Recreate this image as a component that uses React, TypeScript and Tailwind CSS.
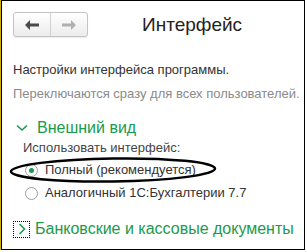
import React from 'react';

const green = 'text-[#1a9a4c]';

const Radio = ({ checked }: { checked?: boolean }) => (
    <span className="flex h-[13px] w-[13px] items-center justify-center rounded-full border border-[#a0a0a0] bg-white">
        {checked && <span className="h-[5px] w-[5px] rounded-full bg-[#1a9a4c]" />}
    </span>
);

const NavButtons = () => (
    <div className="flex h-[25px] w-[75px] rounded-[3px] border border-[#c4c4c4] bg-gradient-to-b from-white to-[#ececec] shadow-[0_1px_1px_rgba(0,0,0,0.08)]">
        <div className="flex flex-1 items-center justify-center border-r border-[#d0d0d0]">
            <svg width="14" height="10" viewBox="0 0 14 10">
                <path d="M0 5 L5 0 L5 3.5 L14 3.5 L14 6.5 L5 6.5 L5 10 Z" fill="#4a4a4a" />
            </svg>
        </div>
        <div className="flex flex-1 items-center justify-center">
            <svg width="14" height="10" viewBox="0 0 14 10">
                <path d="M14 5 L9 0 L9 3.5 L0 3.5 L0 6.5 L9 6.5 L9 10 Z" fill="#b0b0b0" />
            </svg>
        </div>
    </div>
);

export default function App() {
    return (
        <div className="h-[252px] w-[307px] bg-white font-['Liberation_Sans',Arial,sans-serif]">
            <div className="flex h-[250px] w-[305px] border-l border-[#cfae00]">
                <div className="relative flex flex-1 flex-col border border-black pl-[11px] pt-[11px]">
                    {/* header */}
                    <div className="flex items-center">
                        <NavButtons />
                        <div className="ml-[54px] text-[19px] leading-[24px] text-[#222]">Интерфейс</div>
                    </div>

                    <div className="mt-[25px] text-[13px] leading-[16px] text-[#333]">
                        Настройки интерфейса программы.
                    </div>
                    <div className="mt-[8px] text-[13px] leading-[16px] text-[#8a8a8a]">
                        Переключаются сразу для всех пользователей.
                    </div>

                    {/* section: appearance */}
                    <div className="mt-[16px] flex items-center">
                        <svg width="12" height="8" viewBox="0 0 12 8" className="ml-[3px]">
                            <path d="M1 1.5 L6 6 L11 1.5" fill="none" stroke="#1a9a4c" strokeWidth="1.6" />
                        </svg>
                        <span className={`ml-[9px] text-[16px] leading-[20px] ${green}`}>Внешний вид</span>
                    </div>
                    <div className="ml-[10px] mt-[2px] text-[13px] leading-[16px] text-[#444]">
                        Использовать интерфейс:
                    </div>
                    <div className="ml-[12px] mt-[6px] flex items-center gap-[7px]">
                        <Radio checked />
                        <span className="text-[13px] leading-[16px] text-[#333]">Полный (рекомендуется)</span>
                    </div>
                    <div className="ml-[12px] mt-[7px] flex items-center gap-[7px]">
                        <Radio />
                        <span className="text-[13px] leading-[16px] text-[#333]">Аналогичный 1С:Бухгалтерии 7.7</span>
                    </div>

                    {/* section: bank */}
                    <div className="mt-[18px] flex items-center">
                        <span className="flex h-[17px] w-[17px] items-center justify-center border border-dotted border-black">
                            <svg width="8" height="12" viewBox="0 0 8 12">
                                <path d="M1.5 1 L6.5 6 L1.5 11" fill="none" stroke="#1a9a4c" strokeWidth="1.6" />
                            </svg>
                        </span>
                        <span className={`ml-[5px] text-[16px] leading-[20px] ${green}`}>
                            Банковские и кассовые документы
                        </span>
                    </div>

                    {/* hand-drawn ellipse */}
                    <svg
                        className="pointer-events-none absolute left-[6px] top-[155px]"
                        width="210"
                        height="28"
                        viewBox="0 0 210 28">
                        <ellipse
                            cx="105"
                            cy="14"
                            rx="102"
                            ry="11.5"
                            fill="none"
                            stroke="#000"
                            strokeWidth="2.5"
                            transform="rotate(-0.8 105 14)"
                        />
                    </svg>
                </div>
            </div>
        </div>
    );
}
